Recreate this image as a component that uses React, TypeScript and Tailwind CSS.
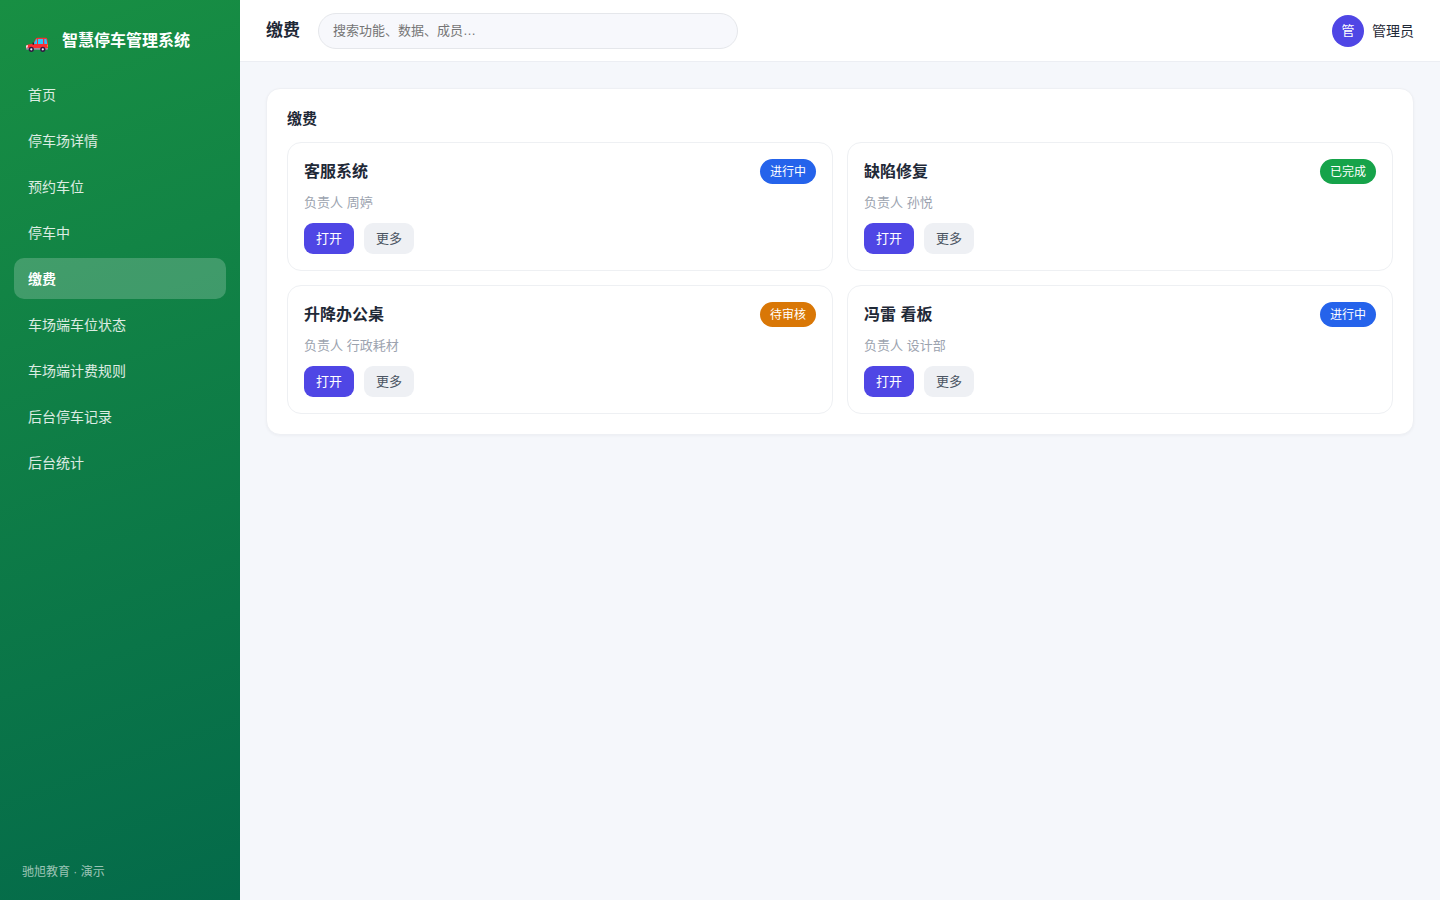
const NAV_ITEMS = [
  "首页",
  "停车场详情",
  "预约车位",
  "停车中",
  "缴费",
  "车场端车位状态",
  "车场端计费规则",
  "后台停车记录",
  "后台统计",
];

const STATUS_STYLES = {
  进行中: "bg-[#2563eb]",
  已完成: "bg-[#16a34a]",
  待审核: "bg-[#d97706]",
};

type Status = keyof typeof STATUS_STYLES;

const CARDS: { title: string; owner: string; status: Status }[] = [
  { title: "客服系统", owner: "周婷", status: "进行中" },
  { title: "缺陷修复", owner: "孙悦", status: "已完成" },
  { title: "升降办公桌", owner: "行政耗材", status: "待审核" },
  { title: "冯雷 看板", owner: "设计部", status: "进行中" },
];

export default function App() {
  return (
    <div className="flex min-h-screen bg-[#f5f7fb] font-['Liberation_Sans','Noto_Sans_CJK_SC',sans-serif] text-sm text-[#1f2937]">
      <Sidebar active="缴费" />
      <div className="flex min-w-0 flex-1 flex-col">
        <Header title="缴费" />
        <main className="p-[26px]">
          <section className="rounded-[14px] border border-[#eef0f4] bg-white p-5 shadow-[0_1px_3px_rgba(15,23,42,0.04)]">
            <h2 className="mb-[13px] text-[15px] leading-5 font-bold">缴费</h2>
            <div className="grid grid-cols-2 gap-[14px]">
              {CARDS.map((card) => (
                <Card key={card.title} {...card} />
              ))}
            </div>
          </section>
        </main>
      </div>
    </div>
  );
}

function Sidebar({ active }: { active: string }) {
  return (
    <aside className="flex w-60 shrink-0 flex-col bg-[linear-gradient(160deg,#188f43,#046a4a)] px-[14px] pt-[21px] pb-[18px] text-white">
      <div className="mb-[13px] flex h-10 items-center gap-[13px] pl-[11px]">
        <CarIcon />
        <span className="text-base leading-6 font-bold">智慧停车管理系统</span>
      </div>
      <nav className="flex flex-1 flex-col gap-[5px]">
        {NAV_ITEMS.map((item) => (
          <a
            key={item}
            href="#"
            className={
              item === active
                ? "flex h-[41px] items-center rounded-[10px] bg-white/20 px-[14px] font-bold"
                : "flex h-[41px] items-center rounded-[10px] px-[14px] text-white/85"
            }
          >
            {item}
          </a>
        ))}
      </nav>
      <div className="px-2 text-xs leading-5 text-white/60">驰旭教育 · 演示</div>
    </aside>
  );
}

function Header({ title }: { title: string }) {
  return (
    <header className="flex h-[62px] items-center border-b border-[#eceef3] bg-white px-[26px]">
      <h1 className="mr-[18px] pt-px text-[17px] leading-6 font-bold">{title}</h1>
      <input
        type="search"
        aria-label="搜索"
        placeholder="搜索功能、数据、成员…"
        className="h-9 w-[420px] rounded-full border border-[#e5e7eb] bg-[#f7f8fc] px-[14px] text-[13px] placeholder:text-[#757575]"
      />
      <div className="ml-auto flex items-center gap-2">
        <span className="flex size-8 items-center justify-center rounded-full bg-[#4f46e5] pt-px text-[13px] text-white">管</span>
        <span className="pt-px">管理员</span>
      </div>
    </header>
  );
}

function Card({ title, owner, status }: { title: string; owner: string; status: Status }) {
  return (
    <article className="rounded-[14px] border border-[#eef0f3] p-4">
      <div className="flex items-center justify-between">
        <h3 className="pt-px text-base leading-6 font-bold">{title}</h3>
        <span className={`flex h-[25px] items-center rounded-full px-[10px] text-xs text-white ${STATUS_STYLES[status]}`}>
          {status}
        </span>
      </div>
      <p className="mt-[9px] text-[13px] leading-5 text-[#9ca3af]">负责人 {owner}</p>
      <div className="mt-[10px] flex gap-[10px]">
        <button type="button" className="h-[31px] rounded-[9px] bg-[#4f46e5] px-3 pt-px text-[13px] text-white">
          打开
        </button>
        <button type="button" className="h-[31px] rounded-[9px] bg-[#eef0f4] px-3 pt-px text-[13px] text-[#4b5563]">
          更多
        </button>
      </div>
    </article>
  );
}

function CarIcon() {
  return (
    <svg width="24" height="16" viewBox="0 0 24 16" className="mt-[7px]" aria-hidden="true">
      <path d="M1 12V9.500Q1 8 3 7.600L8 6.700 10.500 2Q11.200.8 12.600.8H20.500Q22 .8 22.300 2.200L23 7V12z" fill="#f92f33" />
      <path d="M8.600 6.900 11 2.500Q11.300 2 12 2v4.900zM13 2h5v4.900h-5zM19.300 2h1.500q.5 0 .7.600l.8 4.300h-3z" fill="#26c9fc" />
      <path d="M8.300 5.500v2.200" stroke="#212121" strokeWidth="1.500" />
      <path d="M1 10.500h22v1.300q0 1-1 1H2q-1 0-1-1z" fill="#998ea4" />
      <path d="M3 8h20v3H3z" fill="#f92f33" />
      <path d="M1 9.200q0-1.200 1.800-1.200v1.500q0 1.200-1.800 1.200z" fill="#fdeaf0" />
      <path d="M22.200 7.800H23v2h-.8z" fill="#ffb02e" />
      <circle cx="6.300" cy="12.300" r="2.600" fill="#321b41" />
      <circle cx="17.800" cy="12.300" r="2.600" fill="#321b41" />
      <circle cx="6.300" cy="12.300" r="1.100" fill="#f3eef8" />
      <circle cx="17.800" cy="12.300" r="1.100" fill="#f3eef8" />
    </svg>
  );
}
